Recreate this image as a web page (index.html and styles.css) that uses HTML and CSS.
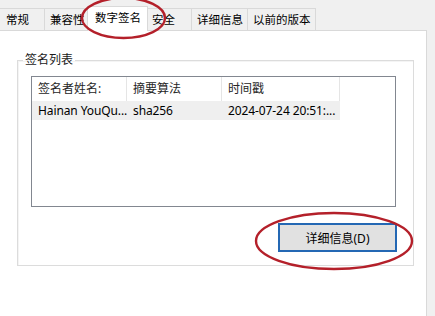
FILE: index.html
```html
<!DOCTYPE html>
<html lang="zh-CN">
<head>
<meta charset="utf-8">
<title>属性 - 数字签名</title>
<link rel="stylesheet" href="styles.css">
</head>
<body>
<div class="window">
  <div class="tabs">
    <div class="tab first">常规</div>
    <div class="tab">兼容性</div>
    <div class="tab active">数字签名</div>
    <div class="tab">安全</div>
    <div class="tab">详细信息</div>
    <div class="tab">以前的版本</div>
  </div>
  <div class="panel">
    <fieldset class="group">
      <legend class="group-label">签名列表</legend>
      <div class="list">
        <div class="list-row list-head">
          <div class="cell">签名者姓名:</div>
          <div class="cell">摘要算法</div>
          <div class="cell">时间戳</div>
        </div>
        <div class="list-row list-item">
          <div class="cell">Hainan YouQu...</div>
          <div class="cell">sha256</div>
          <div class="cell">2024-07-24 20:51:...</div>
        </div>
      </div>
      <div class="actions">
        <button class="btn" type="button">详细信息(D)</button>
      </div>
    </fieldset>
  </div>
</div>
<svg class="marks" width="435" height="316" viewBox="0 0 435 316">
  <ellipse cx="123.5" cy="18" rx="41.5" ry="20" fill="none" stroke="#b4202a" stroke-width="2.4"/>
  <ellipse cx="334" cy="241" rx="78" ry="28" fill="none" stroke="#b4202a" stroke-width="2.4"/>
</svg>
</body>
</html>
```
FILE: styles.css
```css
html, body {
  margin: 0;
  padding: 0;
}
body {
  width: 435px;
  height: 316px;
  overflow: hidden;
  background: #f0f0f0;
  font-family: "Noto Sans", "Noto Sans CJK SC", sans-serif;
  font-size: 12px;
  color: #000;
  position: relative;
}
.window {
  margin-left: -2px;
}
.tabs {
  display: flex;
  align-items: flex-end;
  height: 30px;
  font-size: 11.5px;
}
.tab {
  height: 22px;
  min-width: 46px;
  line-height: 21px;
  padding: 0 4px 0 5px;
  background: #f0f0f0;
  border: 1px solid #d9d9d9;
  border-bottom: none;
  margin-right: -1px;
  white-space: nowrap;
  box-sizing: border-box;
}
.tab.first {
  width: 47px;
  padding-left: 7px;
}
.tab.active {
  position: relative;
  z-index: 2;
  height: 25px;
  margin: 0 -2px -1px -2px;
  padding: 0 6px 0 7px;
  line-height: 22px;
  background: #fff;
}
.panel {
  width: 429px;
  height: 300px;
  box-sizing: border-box;
  background: #fff;
  border: 1px solid #d9d9d9;
  padding: 21px 12px 0 18px;
}
.group {
  margin: 0;
  padding: 8px 16px 13px 13px;
  border: 1px solid #dcdcdc;
  box-shadow: inset 1px 1px 0 #f4f4f4;
  min-width: 0;
}
.group-label {
  margin-left: -8px;
  padding: 0 2px;
  line-height: 16px;
  color: #1a1a1a;
}
.list {
  width: 365px;
  height: 131px;
  box-sizing: border-box;
  border: 1px solid #828790;
  background: #fff;
}
.list-row {
  display: grid;
  grid-template-columns: 95px 95px 118px;
  width: 308px;
}
.list-head {
  height: 24px;
  line-height: 24px;
  color: #262626;
}
.list-head .cell {
  border-right: 1px solid #e5e5e5;
}
.list-item {
  height: 19px;
  line-height: 19px;
  background: #efefef;
  letter-spacing: -0.1px;
}
.cell {
  padding-left: 6px;
  white-space: nowrap;
  overflow: visible;
}
.actions {
  display: flex;
  justify-content: flex-end;
  margin-top: 16px;
}
.btn {
  width: 119px;
  height: 29px;
  box-sizing: border-box;
  border: 2px solid #2468b4;
  background: #e1e1e1;
  font: inherit;
  color: #000;
  padding: 0;
}
.marks {
  position: absolute;
  left: 0;
  top: 0;
  pointer-events: none;
  z-index: 5;
}
```
